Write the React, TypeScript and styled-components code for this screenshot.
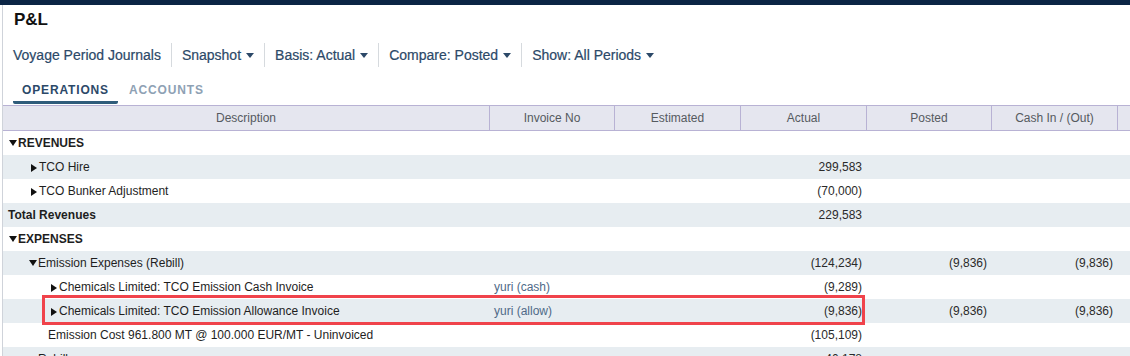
import React from "react";
import styled, { createGlobalStyle } from "styled-components";

const GlobalStyle = createGlobalStyle`
  html, body { margin: 0; padding: 0; background: #ffffff; }
  body { font-family: "Liberation Sans", Arial, sans-serif; overflow: hidden; }
  * { box-sizing: border-box; }
`;

const Page = styled.div`
  border-top: 5px solid #0b2545;
  width: 1130px;
  height: 356px;
  overflow: hidden;
`;

const Frame = styled.div`
  margin-left: 2px;
  border-left: 1px solid #cfd3da;
  height: 100%;
  display: flex;
  flex-direction: column;
`;

const Title = styled.h1`
  margin: 5px 0 0 0;
  padding-left: 11px;
  font-size: 17px;
  line-height: 20px;
  font-weight: bold;
  color: #111;
`;

const Toolbar = styled.div`
  display: flex;
  align-items: stretch;
  margin-top: 13px;
  height: 24px;
`;

const ToolItem = styled.div<{ $first?: boolean }>`
  display: flex;
  align-items: center;
  gap: 5px;
  padding: 0 10px;
  font-size: 14px;
  line-height: 24px;
  color: #2c4968;
  -webkit-text-stroke: 0.2px #2c4968;
  border-left: ${(p) => (p.$first ? "none" : "1px solid #d6dade")};
`;

const ToolCaret = styled.span`
  display: inline-block;
  width: 0;
  height: 0;
  border-left: 4.5px solid transparent;
  border-right: 4.5px solid transparent;
  border-top: 5px solid #2c4968;
  margin-top: 1px;
`;

const Tabs = styled.div`
  display: flex;
  gap: 2px;
  padding-left: 10px;
  margin-bottom: 1px;
`;

const Tab = styled.div<{ $active?: boolean }>`
  padding: 15px 9px 3px 9px;
  font-size: 12px;
  line-height: 16px;
  font-weight: bold;
  letter-spacing: 0.85px;
  color: ${(p) => (p.$active ? "#2c4968" : "#8ea1b4")};
  border-bottom: 3px solid ${(p) => (p.$active ? "#2e5c7a" : "transparent")};
  border-radius: 0 0 2px 2px;
`;

const Table = styled.div`
  position: relative;
  flex: 1;
`;

const cols = "487px 125px 126px 126px 125px 126px 1fr";

const HeaderRow = styled.div`
  display: grid;
  grid-template-columns: ${cols};
  background: #e5e6ef;
  border-top: 1px solid #b8b2d4;
  border-bottom: 1px solid #b8b2d4;
`;

const HeaderCell = styled.div`
  height: 24px;
  line-height: 24px;
  font-size: 12px;
  color: #555a60;
  text-align: center;
  border-right: 1px solid #b8b2d4;
  &:last-child { border-right: none; }
`;

const Row = styled.div<{ $alt: boolean }>`
  display: grid;
  grid-template-columns: ${cols};
  height: 24px;
  background: ${(p) => (p.$alt ? "#e7edf1" : "#ffffff")};
`;

const DescCell = styled.div<{ $indent: number; $bold?: boolean }>`
  display: flex;
  align-items: center;
  padding-left: ${(p) => p.$indent}px;
  font-size: 12px;
  line-height: 24px;
  color: #1e1e1e;
  font-weight: ${(p) => (p.$bold ? "bold" : "normal")};
  white-space: nowrap;
`;

const InvoiceCell = styled.div`
  padding-left: 4px;
  font-size: 12px;
  line-height: 24px;
  color: #4f6a88;
  white-space: nowrap;
`;

const NumCell = styled.div`
  padding-right: 5px;
  text-align: right;
  font-size: 12px;
  line-height: 24px;
  color: #2a2a2a;
`;

const CaretDown = styled.span`
  display: inline-block;
  width: 0;
  height: 0;
  border-left: 4.5px solid transparent;
  border-right: 4.5px solid transparent;
  border-top: 6px solid #111;
  margin-right: 1px;
`;

const CaretRight = styled.span`
  display: inline-block;
  width: 0;
  height: 0;
  border-top: 4.5px solid transparent;
  border-bottom: 4.5px solid transparent;
  border-left: 6px solid #111;
  margin-right: 2px;
  margin-top: 1px;
`;

const Highlight = styled.div`
  position: absolute;
  left: 39px;
  top: 190px;
  width: 823px;
  height: 30px;
  border: 3px solid #f0434b;
  pointer-events: none;
`;

type RowData = {
  label: string;
  indent: number;
  caret?: "down" | "right";
  bold?: boolean;
  invoice?: string;
  estimated?: string;
  actual?: string;
  posted?: string;
  cash?: string;
};

const rows: RowData[] = [
  { label: "REVENUES", indent: 6, caret: "down", bold: true },
  { label: "TCO Hire", indent: 28, caret: "right", actual: "299,583" },
  { label: "TCO Bunker Adjustment", indent: 28, caret: "right", actual: "(70,000)" },
  { label: "Total Revenues", indent: 5, bold: true, actual: "229,583" },
  { label: "EXPENSES", indent: 6, caret: "down", bold: true },
  {
    label: "Emission Expenses (Rebill)",
    indent: 26,
    caret: "down",
    actual: "(124,234)",
    posted: "(9,836)",
    cash: "(9,836)",
  },
  {
    label: "Chemicals Limited: TCO Emission Cash Invoice",
    indent: 48,
    caret: "right",
    invoice: "yuri (cash)",
    actual: "(9,289)",
  },
  {
    label: "Chemicals Limited: TCO Emission Allowance Invoice",
    indent: 48,
    caret: "right",
    invoice: "yuri (allow)",
    actual: "(9,836)",
    posted: "(9,836)",
    cash: "(9,836)",
  },
  {
    label: "Emission Cost 961.800 MT @ 100.000 EUR/MT - Uninvoiced",
    indent: 45,
    actual: "(105,109)",
  },
  { label: "Rebill", indent: 27, caret: "right", actual: "40,178" },
];

const headers = ["Description", "Invoice No", "Estimated", "Actual", "Posted", "Cash In / (Out)", ""];
const toolItems = [
  { label: "Voyage Period Journals", caret: false },
  { label: "Snapshot", caret: true },
  { label: "Basis: Actual", caret: true },
  { label: "Compare: Posted", caret: true },
  { label: "Show: All Periods", caret: true },
];

export default function App() {
  return (
    <>
      <GlobalStyle />
      <Page>
        <Frame>
          <Title>P&amp;L</Title>
          <Toolbar>
            {toolItems.map((t, i) => (
              <ToolItem key={t.label} $first={i === 0}>
                {t.label}
                {t.caret && <ToolCaret />}
              </ToolItem>
            ))}
          </Toolbar>
          <Tabs>
            <Tab $active>OPERATIONS</Tab>
            <Tab>ACCOUNTS</Tab>
          </Tabs>
          <Table>
            <HeaderRow>
              {headers.map((h, i) => (
                <HeaderCell key={i}>{h}</HeaderCell>
              ))}
            </HeaderRow>
            {rows.map((r, i) => (
              <Row key={i} $alt={i % 2 === 1}>
                <DescCell $indent={r.indent} $bold={r.bold}>
                  {r.caret === "down" && <CaretDown />}
                  {r.caret === "right" && <CaretRight />}
                  {r.label}
                </DescCell>
                <InvoiceCell>{r.invoice}</InvoiceCell>
                <NumCell>{r.estimated}</NumCell>
                <NumCell>{r.actual}</NumCell>
                <NumCell>{r.posted}</NumCell>
                <NumCell>{r.cash}</NumCell>
                <NumCell />
              </Row>
            ))}
            <Highlight />
          </Table>
        </Frame>
      </Page>
    </>
  );
}
